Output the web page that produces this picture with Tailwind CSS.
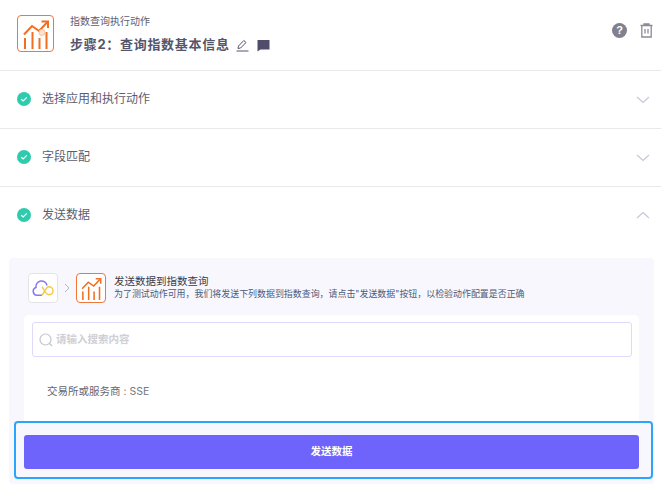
<!DOCTYPE html>
<html lang="zh">
<head>
    <meta charset="UTF-8">
    <title>步骤2</title>
    <script src="https://cdn.jsdelivr.net/npm/@tailwindcss/browser@4"></script>
</head>
<body class="bg-white font-['Inter','Noto_Sans_CJK_SC',sans-serif] overflow-hidden">
<div class="w-[661px] h-[492px] overflow-hidden">
    <!-- 头部 -->
    <header class="h-[71px] border-b border-[#e9e9ec] flex items-start pl-[17px] pr-[8px]">
        <div class="mt-[15px] w-[37px] h-[37px] rounded-[4px] border border-[#f0763a] shrink-0">
            <svg class="-m-px" width="37" height="37" viewBox="0 0 37 37" fill="none" stroke="#f26f21" stroke-width="2">
                <path d="M7 19.500 L15 11 L22 16 L30 7.500"/>
                <path d="M24.500 6.500 H31 V13"/>
                <path d="M8 23 V34 M15.500 17 V34 M22.500 23 V34 M29.500 17 V34"/>
                <circle cx="25" cy="17.500" r="3" fill="#fde3d2" stroke="#f8c3a2" stroke-width="1"/>
            </svg>
        </div>
        <div class="ml-[16px] flex-1 pt-[14px]">
            <p class="text-[10px] leading-[14px] text-[#5d5d70]">指数查询执行动作</p>
            <div class="flex items-center mt-[8px] h-[18px]">
                <span class="text-[13px] font-bold tracking-[0.7px] text-[#55556a]">步骤2：查询指数基本信息</span>
                <svg class="ml-[6px]" width="13" height="13" viewBox="0 0 13 13" fill="none" stroke="#555568" stroke-width="1">
                    <path d="M2 9.500 L2.500 7 L7.800 1.500 L10 3.500 L4.600 9 Z"/>
                    <path d="M0.500 12 H12.500"/>
                </svg>
                <svg class="ml-[8px]" width="13" height="13" viewBox="0 0 13 13" fill="#4e4e6c">
                    <path d="M0.500 1 H12.500 V10.500 H3.500 L0.500 12.500 Z"/>
                </svg>
            </div>
        </div>
        <div class="flex items-center gap-[13px] mt-[23px]">
            <div class="w-[15px] h-[15px] rounded-full bg-[#80808f] text-white text-[11px] font-bold leading-[15px] text-center font-['Liberation_Sans']">?</div>
            <svg width="13" height="15" viewBox="0 0 13 15" fill="none" stroke="#8a8a98" stroke-width="1.300">
                <path d="M0.500 2.500 H12.500 M4 2.500 V1 H9 V2.500"/>
                <path d="M1.800 2.500 V14 H11.200 V2.500"/>
                <path d="M5 6 V10.500 M8 6 V10.500"/>
            </svg>
        </div>
    </header>

    <!-- 折叠行 -->
    <div class="h-[58px] border-b border-[#e9e9ec] flex items-center pl-[17px] pr-[11px]">
        <svg class="-mt-[1px]" width="14" height="14" viewBox="0 0 14 14"><circle cx="7" cy="7" r="7" fill="#2fcbad"/><path d="M4.200 7.200 L6.200 9 L9.800 5.400" fill="none" stroke="#fff" stroke-width="1.200"/></svg>
        <span class="ml-[11px] flex-1 -mt-[2px] text-[12px] text-[#5d5d70]">选择应用和执行动作</span>
        <svg width="14" height="8" viewBox="0 0 14 8" fill="none" stroke="#c3c9d6" stroke-width="1.200"><path d="M1 1 L7 6.500 L13 1"/></svg>
    </div>
    <div class="h-[58px] border-b border-[#e9e9ec] flex items-center pl-[17px] pr-[11px]">
        <svg class="-mt-[1px]" width="14" height="14" viewBox="0 0 14 14"><circle cx="7" cy="7" r="7" fill="#2fcbad"/><path d="M4.200 7.200 L6.200 9 L9.800 5.400" fill="none" stroke="#fff" stroke-width="1.200"/></svg>
        <span class="ml-[11px] flex-1 -mt-[2px] text-[12px] text-[#5d5d70]">字段匹配</span>
        <svg width="14" height="8" viewBox="0 0 14 8" fill="none" stroke="#c3c9d6" stroke-width="1.200"><path d="M1 1 L7 6.500 L13 1"/></svg>
    </div>
    <div class="h-[58px] flex items-center pl-[17px] pr-[11px]">
        <svg class="-mt-[2px]" width="14" height="14" viewBox="0 0 14 14"><circle cx="7" cy="7" r="7" fill="#2fcbad"/><path d="M4.200 7.200 L6.200 9 L9.800 5.400" fill="none" stroke="#fff" stroke-width="1.200"/></svg>
        <span class="ml-[11px] flex-1 -mt-[2px] text-[12px] text-[#5d5d70]">发送数据</span>
        <svg class="-mt-[2px]" width="14" height="8" viewBox="0 0 14 8" fill="none" stroke="#c3c9d6" stroke-width="1.200"><path d="M1 7 L7 1.500 L13 7"/></svg>
    </div>

    <!-- 发送数据面板 -->
    <section class="relative mt-[13px] ml-[9px] w-[645px] h-[226px] bg-[#f8f7fe] rounded-[4px]">
        <div class="flex items-center pl-[19px] pt-[15px] h-[45px]">
            <div class="w-[30px] h-[30px] bg-white rounded-[4px] border border-[#e3e3e8] flex items-center justify-center">
                <svg width="22" height="18" viewBox="0 0 22 18" fill="none" stroke-width="1.500">
                    <path d="M10 16 C9 16.300 7 16.300 5 16.300 A4 4 0 0 1 4 8.500 A5.500 5.500 0 0 1 15 6.500" stroke="#8378f5"/>
                    <path d="M10 7.800 C12 10 13.500 15.800 17 15.800 A4 4 0 0 0 17 7.800 C14 7.800 12.500 13.500 10 16" stroke="#f5c842"/>
                </svg>
            </div>
            <svg class="mx-[5px]" width="8" height="10" viewBox="0 0 8 10" fill="none" stroke="#b5b5bf" stroke-width="1"><path d="M2 1 L6 5 L2 9"/></svg>
            <div class="w-[30px] h-[30px] bg-white rounded-[4px] border border-[#f0763a] flex items-center justify-center">
                <svg width="24" height="24" viewBox="3 3 31 31" fill="none" stroke="#f26f21" stroke-width="2">
                    <path d="M7 19.500 L15 11 L22 16 L30 7.500"/>
                    <path d="M24.500 6.500 H31 V13"/>
                    <path d="M8 23 V34 M15.500 17 V34 M22.500 23 V34 M29.500 17 V34"/>
                </svg>
            </div>
            <div class="ml-[8px] -mt-[1px]">
                <p class="text-[10.500px] leading-[13px] text-[#3c3c48]">发送数据到指数查询</p>
                <p class="text-[8.950px] leading-[12px] text-[#4c5a78]">为了测试动作可用，我们将发送下列数据到指数查询，请点击"发送数据"按钮，以检验动作配置是否正确</p>
            </div>
        </div>
        <div class="mt-[12px] ml-[15px] w-[615px] h-[120px] bg-white rounded-[5px] pt-[7px] pl-[8px] pr-[7px]">
            <div class="h-[35px] border border-[#dfd9fb] rounded-[3px] flex items-center pl-[6px]">
                <svg width="14" height="14" viewBox="0 0 14 14" fill="none" stroke="#c4c4cc" stroke-width="1.200"><circle cx="6.500" cy="6.500" r="5.500"/><path d="M10.500 10.500 L13 13"/></svg>
                <span class="ml-[3px] text-[10.500px] font-bold text-[#cfcfd6]">请输入搜索内容</span>
            </div>
            <p class="mt-[28px] ml-[15px] text-[10.500px] leading-[14px] text-[#77777f]"><span class="text-[#66666e]">交易所或服务商</span> : SSE</p>
        </div>
        <!-- 选中框盖在面板上 -->
        <div class="absolute left-[5px] top-[163px] w-[639px] h-[58px] border-2 border-[#2aa5fb] rounded-[4px] bg-[#f8f7fe] pl-[8px] pt-[12px]">
            <button class="block w-[615px] h-[34px] bg-[#6e63fa] rounded-[3px] text-white text-[10.500px] font-bold">发送数据</button>
        </div>
    </section>
</div>
</body>
</html>
